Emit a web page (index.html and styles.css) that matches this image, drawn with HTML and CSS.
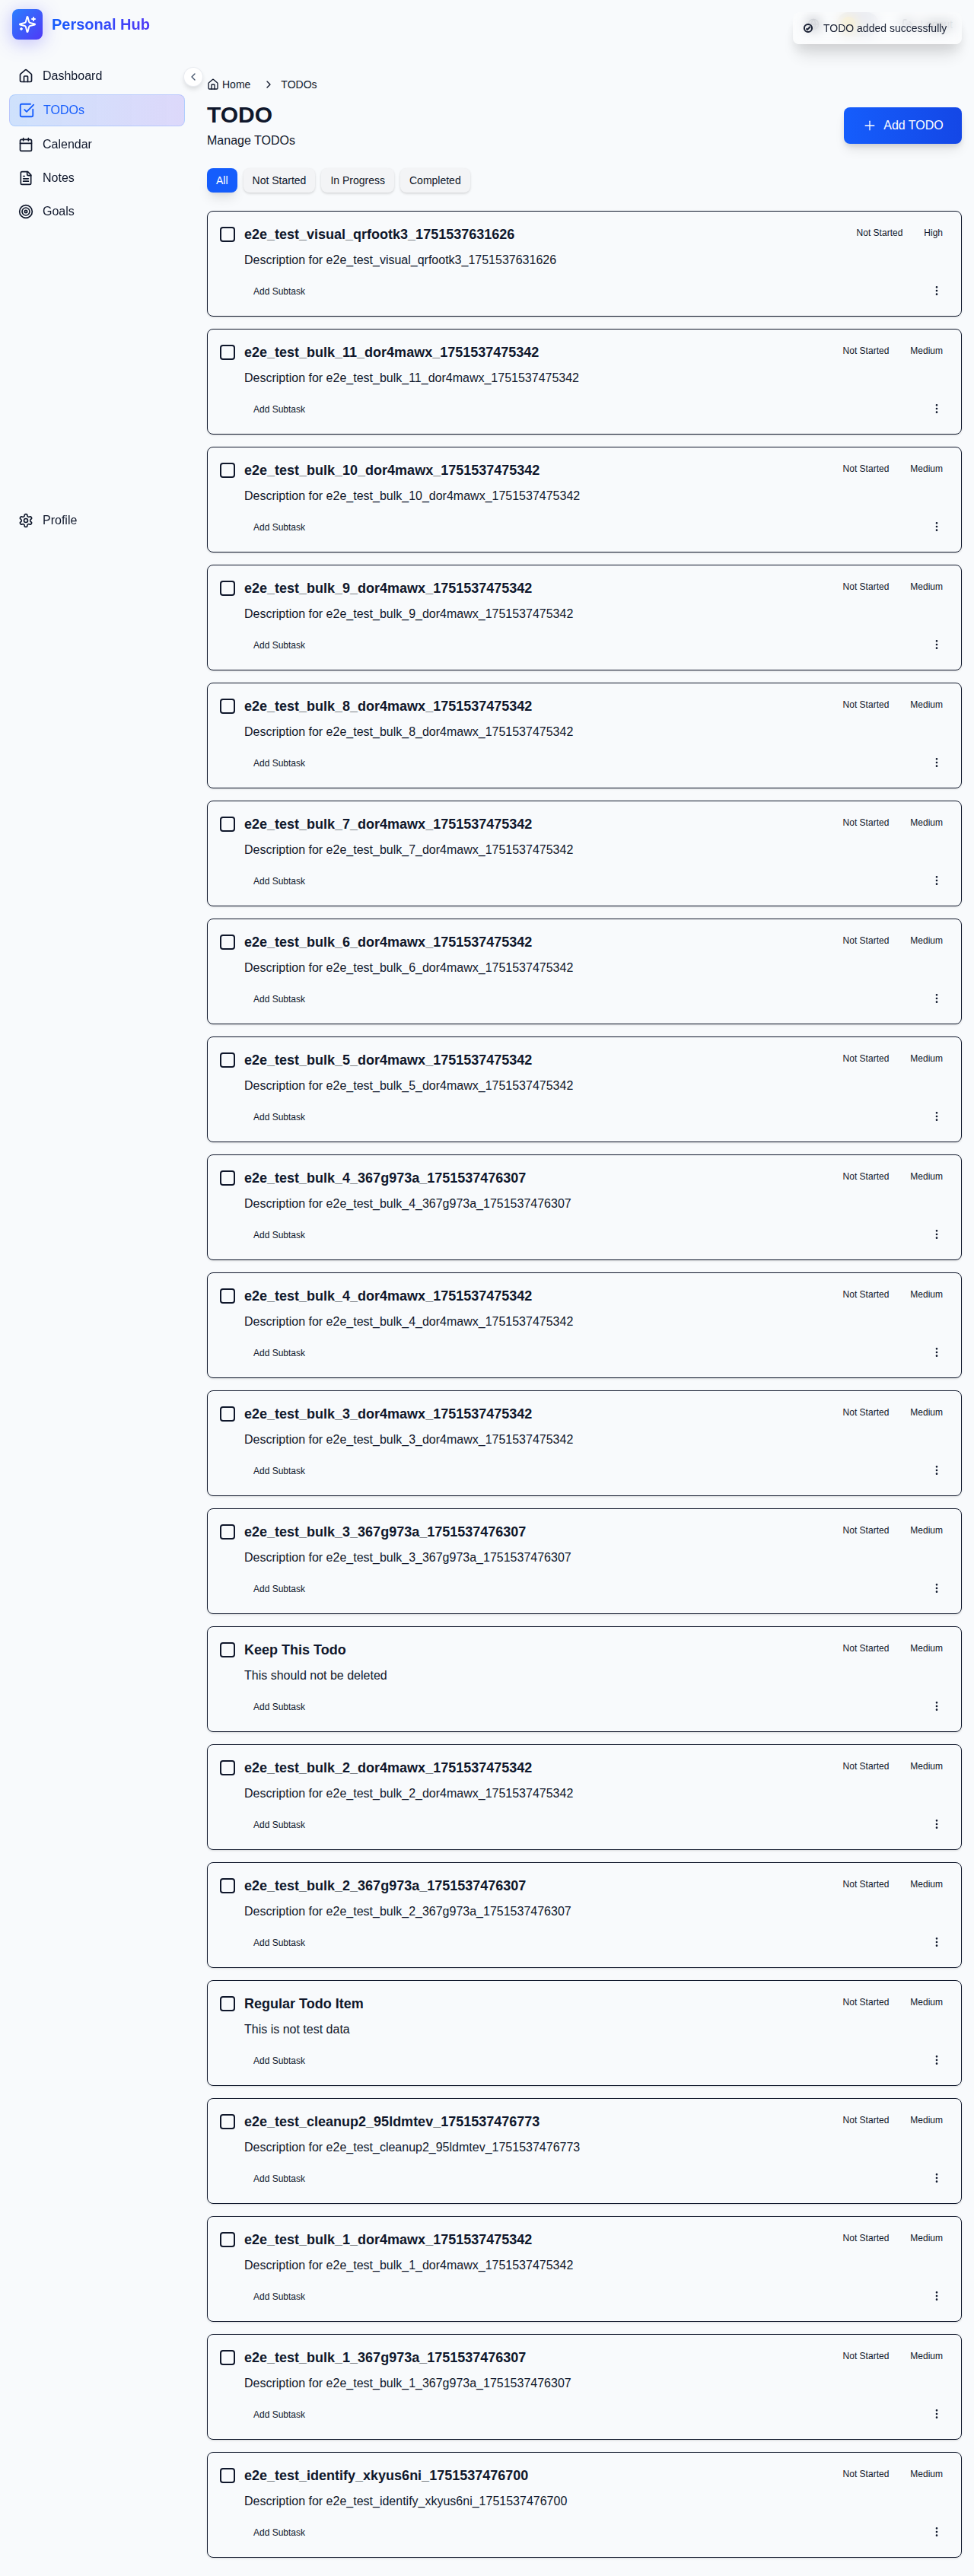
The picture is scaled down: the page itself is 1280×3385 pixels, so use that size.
FILE: index.html
```html
<!DOCTYPE html>
<html lang="en">
<head>
<meta charset="utf-8">
<title>Personal Hub – TODOs</title>
<link rel="stylesheet" href="styles.css">
</head>
<body>
<svg class="sprite" width="0" height="0" aria-hidden="true">
  <symbol id="house" viewBox="0 0 24 24"><path d="M15 21v-8a1 1 0 0 0-1-1h-4a1 1 0 0 0-1 1v8"/><path d="M3 10a2 2 0 0 1 .709-1.528l7-5.999a2 2 0 0 1 2.582 0l7 5.999A2 2 0 0 1 21 10v9a2 2 0 0 1-2 2H5a2 2 0 0 1-2-2z"/></symbol>
  <symbol id="check" viewBox="0 0 24 24"><path d="M21 10.5V19a2 2 0 0 1-2 2H5a2 2 0 0 1-2-2V5a2 2 0 0 1 2-2h12.5"/><path d="m9 11 3 3L22 4"/></symbol>
  <symbol id="calendar" viewBox="0 0 24 24"><path d="M8 2v4"/><path d="M16 2v4"/><rect width="18" height="18" x="3" y="4" rx="2"/><path d="M3 10h18"/></symbol>
  <symbol id="notes" viewBox="0 0 24 24"><path d="M15 2H6a2 2 0 0 0-2 2v16a2 2 0 0 0 2 2h12a2 2 0 0 0 2-2V7Z"/><path d="M14 2v4a2 2 0 0 0 2 2h4"/><path d="M10 9H8"/><path d="M16 13H8"/><path d="M16 17H8"/></symbol>
  <symbol id="target" viewBox="0 0 24 24"><circle cx="12" cy="12" r="10"/><circle cx="12" cy="12" r="6"/><circle cx="12" cy="12" r="2"/></symbol>
  <symbol id="settings" viewBox="0 0 24 24"><path d="M12.22 2h-.44a2 2 0 0 0-2 2v.18a2 2 0 0 1-1 1.73l-.43.25a2 2 0 0 1-2 0l-.15-.08a2 2 0 0 0-2.73.73l-.22.38a2 2 0 0 0 .73 2.73l.15.1a2 2 0 0 1 1 1.72v.51a2 2 0 0 1-1 1.74l-.15.09a2 2 0 0 0-.73 2.73l.22.38a2 2 0 0 0 2.73.73l.15-.08a2 2 0 0 1 2 0l.43.25a2 2 0 0 1 1 1.73V20a2 2 0 0 0 2 2h.44a2 2 0 0 0 2-2v-.18a2 2 0 0 1 1-1.73l.43-.25a2 2 0 0 1 2 0l.15.08a2 2 0 0 0 2.73-.73l.22-.39a2 2 0 0 0-.73-2.73l-.15-.08a2 2 0 0 1-1-1.74v-.5a2 2 0 0 1 1-1.74l.15-.09a2 2 0 0 0 .73-2.73l-.22-.38a2 2 0 0 0-2.73-.73l-.15.08a2 2 0 0 1-2 0l-.43-.25a2 2 0 0 1-1-1.73V4a2 2 0 0 0-2-2z"/><circle cx="12" cy="12" r="3"/></symbol>
  <symbol id="sparkles" viewBox="0 0 24 24"><path d="M9.937 15.5A2 2 0 0 0 8.5 14.063l-6.135-1.582a.5.5 0 0 1 0-.962L8.5 9.936A2 2 0 0 0 9.937 8.5l1.582-6.135a.5.5 0 0 1 .963 0L14.063 8.5A2 2 0 0 0 15.5 9.937l6.135 1.581a.5.5 0 0 1 0 .964L15.5 14.063a2 2 0 0 0-1.437 1.437l-1.582 6.135a.5.5 0 0 1-.963 0z"/><path d="M20 3v4"/><path d="M22 5h-4"/><path d="M4 17v2"/><path d="M5 18H3"/></symbol>
  <symbol id="left" viewBox="0 0 24 24"><path d="m15 18-6-6 6-6"/></symbol>
  <symbol id="right" viewBox="0 0 24 24"><path d="m9 18 6-6-6-6"/></symbol>
  <symbol id="plus" viewBox="0 0 24 24"><path d="M5 12h14"/><path d="M12 5v14"/></symbol>
  <symbol id="more" viewBox="0 0 24 24"><circle cx="12" cy="12" r="1"/><circle cx="12" cy="5" r="1"/><circle cx="12" cy="19" r="1"/></symbol>
  <symbol id="globe" viewBox="0 0 24 24"><circle cx="12" cy="12" r="10"/><path d="M12 2a14.5 14.5 0 0 0 0 20 14.5 14.5 0 0 0 0-20"/><path d="M2 12h20"/></symbol>
  <symbol id="logout" viewBox="0 0 24 24"><path d="M9 21H5a2 2 0 0 1-2-2V5a2 2 0 0 1 2-2h4"/><path d="m16 17 5-5-5-5"/><path d="M21 12H9"/></symbol>
</svg>

<header class="topbar">
  <div class="brand">
    <span class="logo"><svg class="icon i24"><use href="#sparkles"/></svg></span>
    <span class="brand-name">Personal Hub</span>
  </div>
  <div class="tools">
    <svg class="icon i16"><use href="#globe"/></svg>
    <span class="switch"><span class="knob"></span></span>
    <span class="logout"><svg class="icon i16"><use href="#logout"/></svg>Logout</span>
  </div>
</header>

<div class="layout">
  <aside class="sidebar">
    <button class="collapse" aria-label="Collapse"><svg class="icon i16"><use href="#left"/></svg></button>
    <nav class="nav">
      <a class="nav-item"><svg class="icon i20"><use href="#house"/></svg>Dashboard</a>
      <a class="nav-item active"><svg class="icon i20"><use href="#check"/></svg>TODOs</a>
      <a class="nav-item"><svg class="icon i20"><use href="#calendar"/></svg>Calendar</a>
      <a class="nav-item"><svg class="icon i20"><use href="#notes"/></svg>Notes</a>
      <a class="nav-item"><svg class="icon i20"><use href="#target"/></svg>Goals</a>
    </nav>
    <a class="nav-item"><svg class="icon i20"><use href="#settings"/></svg>Profile</a>
  </aside>

  <main class="main">
    <div class="crumbs"><svg class="icon i16"><use href="#house"/></svg><span class="crumb-home">Home</span><svg class="icon i16 sep"><use href="#right"/></svg><span>TODOs</span></div>
    <div class="page-head">
      <div>
        <h1>TODO</h1>
        <p class="subtitle">Manage TODOs</p>
      </div>
      <button class="add"><svg class="icon i20"><use href="#plus"/></svg>Add TODO</button>
    </div>
    <div class="filters">
      <button class="filter on">All</button>
      <button class="filter">Not Started</button>
      <button class="filter">In Progress</button>
      <button class="filter">Completed</button>
    </div>
    <div class="list" id="list"></div>
  </main>
</div>

<div class="toast" role="status">
  <svg class="toast-icon" viewBox="0 0 16 16"><circle cx="8" cy="8" r="5.1"/><path d="M5.4 8.4 7.1 9.9 10.8 6"/></svg>
  <span>TODO added successfully</span>
</div>
<script src="app.js"></script>
</body>
</html>
```
FILE: styles.css
```css
*, *::before, *::after { box-sizing: border-box; }
body { margin: 0; background: #f8fafc; color: #0f172b; font: 16px/24px "Liberation Sans", Arial, sans-serif; }
h1, h2, p { margin: 0; }
button { font: inherit; color: inherit; border: 0; padding: 0; background: none; }
.sprite { position: absolute; }
.icon { fill: none; stroke: currentColor; stroke-width: 2; stroke-linecap: round; stroke-linejoin: round; flex: none; display: block; }
.i16 { width: 16px; height: 16px; }
.i20 { width: 20px; height: 20px; }
.i24 { width: 24px; height: 24px; }

.topbar { height: 64px; padding: 0 16px; display: flex; align-items: center; justify-content: space-between; }
.brand { display: flex; align-items: center; gap: 12px; }
.logo { width: 40px; height: 40px; border-radius: 8px; display: grid; place-items: center; color: #fff; background: linear-gradient(135deg, #2b7fff, #4f39f6); box-shadow: 0 4px 24px rgba(85, 80, 250, .36); }
.brand-name { font-size: 20px; line-height: 28px; font-weight: 700; color: transparent; background: linear-gradient(90deg, #155dfc, #4f39f6); background-clip: text; -webkit-background-clip: text; }
.tools { display: flex; align-items: center; font-size: 14px; padding-right: 12px; }
.switch { width: 56px; height: 32px; margin: 0 30px 0 22px; padding: 6px; border-radius: 16px; background: #dfe2ea; }
.knob { display: block; width: 20px; height: 20px; border-radius: 50%; background: #fde9a8; }
.logout { display: flex; align-items: center; gap: 8px; }

.layout { display: flex; align-items: flex-start; }
.sidebar { position: relative; width: 256px; height: 656px; flex: none; padding: 16px 12px; display: flex; flex-direction: column; justify-content: space-between; will-change: transform; }
.nav { display: flex; flex-direction: column; gap: 4px; }
.nav-item { display: flex; align-items: center; gap: 12px; padding: 8px 12px; margin-right: 1px; border-radius: 8px; }
.nav-item.active { color: #155dfc; border: 1px solid rgba(43, 127, 255, .2); background: linear-gradient(90deg, rgba(43, 127, 255, .2), rgba(97, 62, 246, .18)); }
.nav-item.active .icon { transform: scale(1.1); }
.collapse { position: absolute; left: 242px; top: 25px; width: 24px; height: 24px; border-radius: 50%; display: grid; place-items: center; background: #fff; color: #45556c; box-shadow: 0 0 0 1px #e8ebf0, 0 4px 6px rgba(0, 0, 0, .13); }

.main { flex: 1; min-width: 0; padding: 37px 16px 24px; }
.crumbs { display: flex; align-items: center; font-size: 14px; line-height: 20px; margin-bottom: 12px; }
.crumb-home { margin-left: 4px; }
.sep { margin: 0 8px 0 16px; }
.page-head { display: flex; align-items: center; justify-content: space-between; margin-bottom: 24px; }
h1 { font-size: 30px; line-height: 36px; font-weight: 700; }
.subtitle { margin-top: 4px; }
.add { width: 155px; height: 48px; border-radius: 8px; display: flex; align-items: center; justify-content: center; gap: 8px; color: #fff; background: linear-gradient(90deg, #155dfc, #1447e6); box-shadow: 0 4px 6px -1px rgba(0, 0, 0, .1), 0 10px 15px -3px rgba(0, 0, 0, .1); }
.add .icon { stroke-width: 1.6; }
.filters { display: flex; gap: 8px; margin-bottom: 24px; }
.filter { height: 32px; padding: 0 12px; border-radius: 8px; font-size: 14px; line-height: 20px; background: #f3f4f6; box-shadow: 0 1px 3px rgba(0, 0, 0, .1), 0 2px 4px -1px rgba(0, 0, 0, .1); }
.filter.on { color: #fff; background: #155dfc; box-shadow: 0 10px 15px -3px rgba(0, 0, 0, .1), 0 4px 6px -4px rgba(0, 0, 0, .1); }

.list { display: flex; flex-direction: column; gap: 16px; }
.card { display: flex; gap: 12px; height: 139px; padding: 16px; border: 1px solid #0f172b; border-radius: 8px; box-shadow: 0 1px 3px rgba(0, 0, 0, .1), 0 1px 2px -1px rgba(0, 0, 0, .1); }
.box { width: 20px; height: 20px; margin-top: 4px; flex: none; border: 2px solid #0f172b; border-radius: 4px; }
.body { flex: 1; min-width: 0; }
.row { display: flex; justify-content: space-between; align-items: flex-start; }
h2 { font-size: 18px; line-height: 28px; font-weight: 700; }
.tags { display: flex; gap: 12px; font-size: 12px; line-height: 16px; padding-top: 4px; }
.tag { padding: 0 8px; }
.desc { margin-top: 8px; line-height: 24px; }
.foot { display: flex; justify-content: space-between; align-items: center; height: 32px; margin-top: 12px; font-size: 12px; padding: 0 8px 0 12px; }
.foot span { margin-top: 2px; }

.toast { position: absolute; right: 16px; top: 16px; width: 222px; height: 42px; padding: 0 12px; border-radius: 8px; display: flex; align-items: center; gap: 12px; font-size: 14px; line-height: 20px; white-space: nowrap; background: rgba(255, 255, 255, .4); backdrop-filter: blur(8px); opacity: .95; box-shadow: 0 10px 15px -3px rgba(0, 0, 0, .1), 0 20px 25px -5px rgba(0, 0, 0, .1); }
.toast-icon { width: 16px; height: 16px; fill: none; stroke: currentColor; stroke-width: 2; }
```
FILE: app.js
```js
const bulk = (n, id) => `e2e_test_bulk_${n}_${id}`;
const A = 'dor4mawx_1751537475342';
const B = '367g973a_1751537476307';
const todos = [
  ['e2e_test_visual_qrfootk3_1751537631626', null, 'High'],
  ...[11, 10, 9, 8, 7, 6, 5].map(n => [bulk(n, A)]),
  [bulk(4, B)], [bulk(4, A)], [bulk(3, A)], [bulk(3, B)],
  ['Keep This Todo', 'This should not be deleted'],
  [bulk(2, A)], [bulk(2, B)],
  ['Regular Todo Item', 'This is not test data'],
  ['e2e_test_cleanup2_95ldmtev_1751537476773'],
  [bulk(1, A)], [bulk(1, B)],
  ['e2e_test_identify_xkyus6ni_1751537476700'],
];
document.getElementById('list').innerHTML = todos.map(([title, desc, priority]) => `
  <article class="card">
    <span class="box"></span>
    <div class="body">
      <div class="row"><h2>${title}</h2><div class="tags"><span class="tag">Not Started</span><span class="tag">${priority || 'Medium'}</span></div></div>
      <p class="desc">${desc || 'Description for ' + title}</p>
      <div class="foot"><span>Add Subtask</span><svg class="icon i16"><use href="#more"/></svg></div>
    </div>
  </article>`).join('');
```
